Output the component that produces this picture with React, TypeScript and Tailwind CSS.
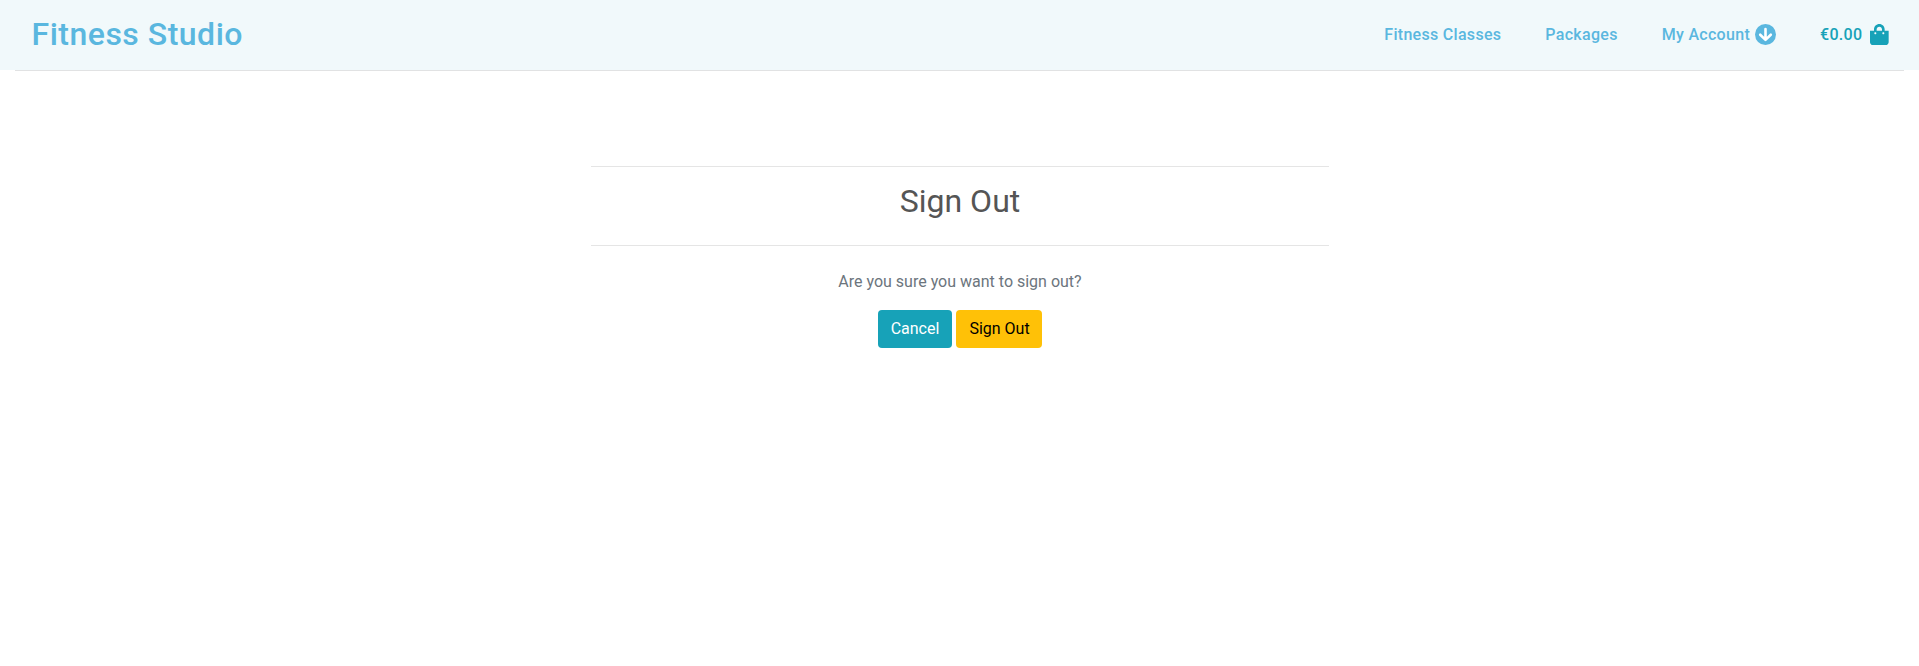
import React from "react";
import { FaShoppingBag } from "react-icons/fa";

function CircleArrowDown() {
  return (
    <svg viewBox="0 0 21 21" className="size-[21px]" fill="none">
      <circle cx="10.5" cy="10.5" r="10.5" fill="currentColor" />
      <path
        d="M10.5 5V15.5M5.2 10.7L10.5 15.9L15.8 10.7"
        stroke="#fff"
        strokeWidth="2.6"
        strokeLinecap="round"
        strokeLinejoin="round"
      />
    </svg>
  );
}

export default function App() {
  return (
    <div className="min-h-[666px] bg-white font-['Roboto',sans-serif] text-base leading-6">
      <header className="flex h-[70px] items-center justify-between bg-[#f1f9fb] pl-[31.5px] pr-[30px] pb-px font-medium text-[#5ab7df]">
        <a className="-mt-0.5 text-[32px] leading-[38px] tracking-[0.5px]">Fitness Studio</a>
        <nav className="flex items-center gap-11 tracking-[0.3px]">
          <a>Fitness Classes</a>
          <a>Packages</a>
          <a className="flex items-center gap-[5px]">
            My Account <CircleArrowDown />
          </a>
          <a className="flex items-center gap-2 text-[#17a2b8]">
            €0.00 <FaShoppingBag className="h-[21.33px] w-[18.66px]" />
          </a>
        </nav>
      </header>
      <hr className="mx-[15px] border-[#e1e2e3]" />
      <main className="mx-auto mt-[95px] w-[738px] text-center">
        <hr className="border-[#e5e5e5]" />
        <h1 className="mt-[15px] pl-px text-[32px] leading-[38px] text-[#555]">Sign Out</h1>
        <hr className="mt-[25px] border-[#e5e5e5]" />
        <p className="mt-6 pl-px text-[#6c757d]">Are you sure you want to sign out?</p>
        <div className="mt-4 flex justify-center gap-1 pl-px">
          <button className="h-[38px] w-[74px] rounded bg-[#17a2b8] text-white">Cancel</button>
          <button className="h-[38px] w-[86px] rounded bg-[#ffc107] pl-px text-black">Sign Out</button>
        </div>
      </main>
    </div>
  );
}
